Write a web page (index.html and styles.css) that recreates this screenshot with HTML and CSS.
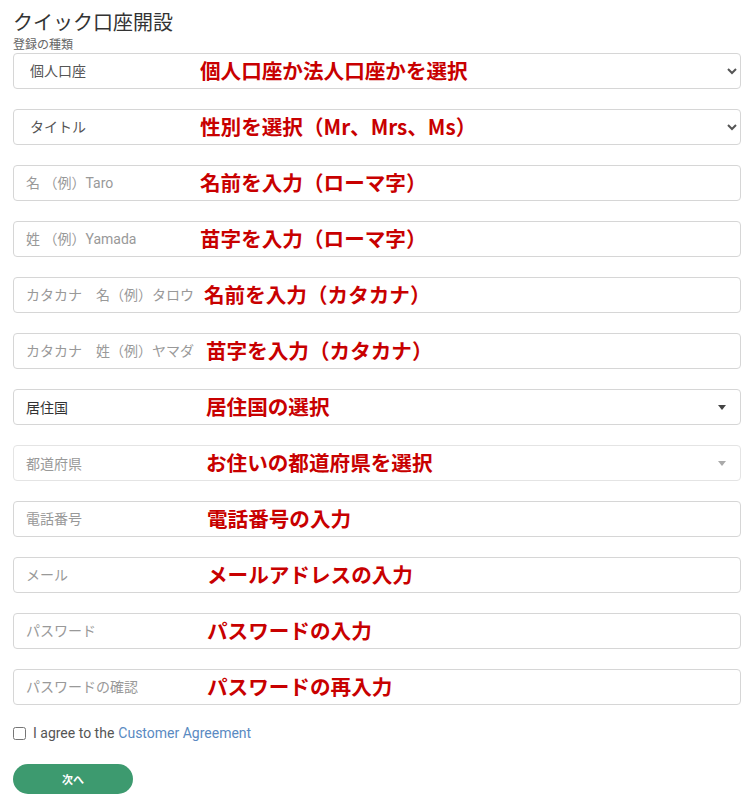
FILE: index.html
```html
<!DOCTYPE html>
<html lang="ja">
<head>
  <meta charset="UTF-8">
  <title>クイック口座開設</title>
  <link rel="stylesheet" href="styles.css">
</head>
<body>

  <div class="page">
    <h2>クイック口座開設</h2>

    <form id="quickForm">
      <label class="type-label" for="accountType">登録の種類</label>

      <div class="row">
        <select id="accountType" class="field">
          <option>個人口座</option>
          <option>法人口座</option>
        </select>
        <span class="note">個人口座か法人口座かを選択</span>
      </div>

      <div class="row">
        <select class="field">
          <option>タイトル</option>
          <option>Mr</option>
          <option>Mrs</option>
          <option>Ms</option>
        </select>
        <span class="note">性別を選択（Mr、Mrs、Ms）</span>
      </div>

      <div class="row">
        <input class="field" type="text" placeholder="名 （例）Taro">
        <span class="note">名前を入力（ローマ字）</span>
      </div>

      <div class="row">
        <input class="field" type="text" placeholder="姓 （例）Yamada">
        <span class="note">苗字を入力（ローマ字）</span>
      </div>

      <div class="row">
        <input class="field" type="text" placeholder="カタカナ　名（例）タロウ">
        <span class="note note-s">名前を入力（カタカナ）</span>
      </div>

      <div class="row">
        <input class="field" type="text" placeholder="カタカナ　姓（例）ヤマダ">
        <span class="note note-m">苗字を入力（カタカナ）</span>
      </div>

      <div class="row">
        <div class="field dropdown">
          <span>居住国</span>
          <span class="caret"></span>
        </div>
        <span class="note note-m">居住国の選択</span>
      </div>

      <div class="row">
        <div class="field dropdown empty">
          <span>都道府県</span>
          <span class="caret"></span>
        </div>
        <span class="note note-m">お住いの都道府県を選択</span>
      </div>

      <div class="row">
        <input class="field" type="tel" placeholder="電話番号">
        <span class="note note-l">電話番号の入力</span>
      </div>

      <div class="row">
        <input class="field" type="email" placeholder="メール">
        <span class="note note-l">メールアドレスの入力</span>
      </div>

      <div class="row">
        <input class="field" type="password" placeholder="パスワード">
        <span class="note note-l">パスワードの入力</span>
      </div>

      <div class="row">
        <input class="field" type="password" placeholder="パスワードの確認">
        <span class="note note-l">パスワードの再入力</span>
      </div>

      <label class="agree">
        <input type="checkbox"> I agree to the <a href="#">Customer Agreement</a>
      </label>

      <button type="button">次へ</button>
    </form>
  </div>

</body>
</html>
```

FILE: styles.css
```css
body {
  margin: 0;
  font-family: Roboto, "Noto Sans CJK JP", sans-serif;
  color: #333;
  background: #fff;
}

.page {
  width: 728px;
  padding: 10px 0 0 13px;
}

h2 {
  margin: 0;
  font-family: "Noto Sans CJK JP", sans-serif;
  font-size: 20px;
  font-weight: normal;
  line-height: 24px;
  color: #333;
}

.type-label {
  display: block;
  margin-top: 3px;
  margin-bottom: 2px;
  font-family: "Noto Sans CJK JP", sans-serif;
  font-size: 12px;
  line-height: 14px;
  color: #666;
}

.row {
  position: relative;
  margin-bottom: 20px;
}

.field {
  display: flex;
  align-items: center;
  width: 100%;
  height: 36px;
  box-sizing: border-box;
  margin: 0;
  padding: 0 12px;
  border: 1px solid #d6d6d6;
  border-radius: 4px;
  background: #fff;
  font-family: Roboto, "Noto Sans CJK JP", sans-serif;
  font-size: 14px;
  color: #555;
  outline: none;
}

.field::placeholder {
  color: #999;
}

select.field {
  padding: 0 8px 0 12px;
}

.dropdown {
  justify-content: space-between;
  color: #333;
}

.dropdown.empty {
  color: #999;
  border-color: #e4e4e4;
}

.caret {
  width: 0;
  height: 0;
  margin-right: 2px;
  border-left: 4px solid transparent;
  border-right: 4px solid transparent;
  border-top: 5px solid #444;
}

.dropdown.empty .caret {
  border-top-color: #aaa;
}

.note {
  position: absolute;
  left: 187px;
  top: 0;
  line-height: 34px;
  font-family: "Noto Sans CJK JP", sans-serif;
  font-size: 20.6px;
  font-weight: bold;
  color: #c80000;
  pointer-events: none;
}

.note-s {
  left: 191px;
}

.note-m {
  left: 193px;
}

.note-l {
  left: 194px;
}

.agree {
  display: flex;
  align-items: center;
  margin-top: 3px;
  font-size: 14px;
  color: #555;
}

.agree input {
  width: 13px;
  height: 13px;
  margin: 0 7px 0 0;
}

.agree a {
  margin-left: 4px;
  color: #5a8ac2;
  text-decoration: none;
}

button {
  display: block;
  width: 120px;
  height: 30px;
  margin-top: 23px;
  border: none;
  border-radius: 15px;
  background-color: #3d9a6f;
  color: #fff;
  font-family: "Noto Sans CJK JP", sans-serif;
  font-size: 11px;
  font-weight: bold;
  cursor: pointer;
}
```
